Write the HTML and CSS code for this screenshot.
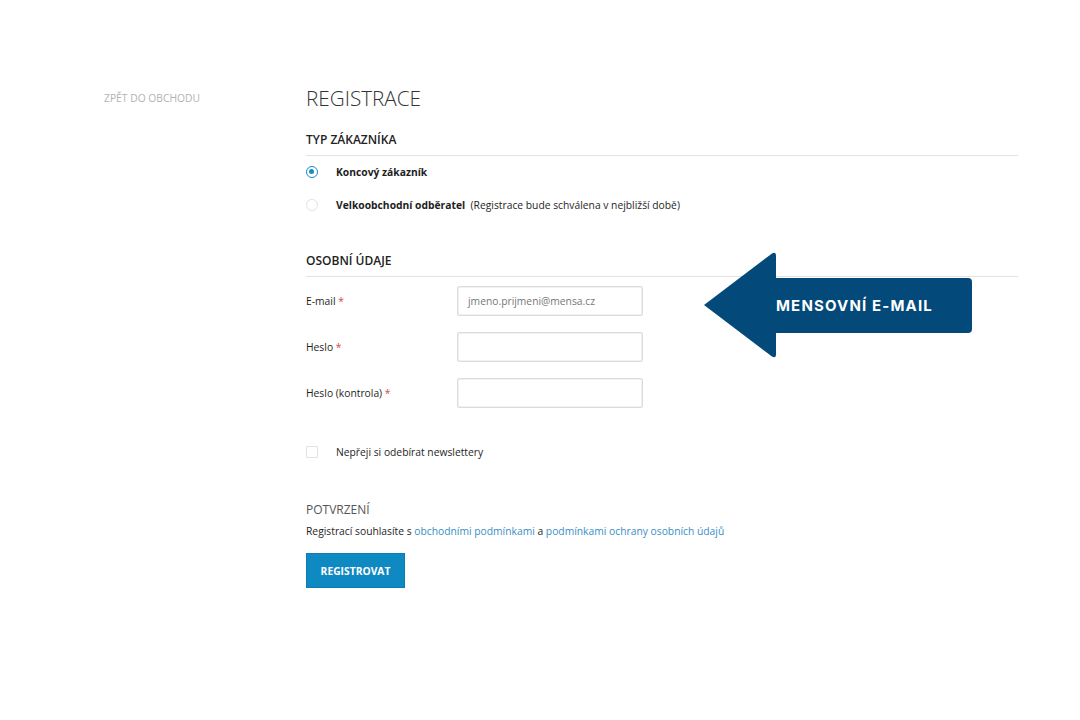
FILE: index.html
```html
<!DOCTYPE html>
<html lang="cs">
<head>
<meta charset="utf-8">
<title>Registrace</title>
<link rel="stylesheet" href="styles.css">
</head>
<body>
<div class="page">
  <aside class="sidebar">
    <a class="back" href="#">ZPĚT DO OBCHODU</a>
  </aside>
  <main class="main">
    <h1 class="title">REGISTRACE</h1>

    <section class="section">
      <h2 class="section-title">TYP ZÁKAZNÍKA</h2>
      <div class="radio-row">
        <span class="radio checked"></span>
        <span class="radio-label"><b>Koncový zákazník</b></span>
      </div>
      <div class="radio-row">
        <span class="radio"></span>
        <span class="radio-label"><b>Velkoobchodní odběratel</b>&nbsp; (Registrace bude schválena v nejbližší době)</span>
      </div>
    </section>

    <section class="section personal">
      <h2 class="section-title">OSOBNÍ ÚDAJE</h2>
      <div class="field">
        <label class="field-label">E-mail <span class="req">*</span></label>
        <div class="input">jmeno.prijmeni@mensa.cz</div>
      </div>
      <div class="field">
        <label class="field-label">Heslo <span class="req">*</span></label>
        <div class="input"></div>
      </div>
      <div class="field">
        <label class="field-label">Heslo (kontrola) <span class="req">*</span></label>
        <div class="input"></div>
      </div>
      <div class="check-row">
        <span class="checkbox"></span>
        <span class="check-label">Nepřeji si odebírat newslettery</span>
      </div>
    </section>

    <section class="confirm">
      <h3 class="confirm-title">POTVRZENÍ</h3>
      <p class="terms">Registrací souhlasíte s <a href="#">obchodními podmínkami</a> a <a href="#">podmínkami ochrany osobních údajů</a></p>
      <button class="submit">REGISTROVAT</button>
    </section>
  </main>
</div>

<div class="callout">
  <svg class="callout-shape" width="270" height="110" viewBox="0 0 270 110">
    <path d="M0 53 L68 1.5 Q72 -1 72 4 L72 26 L264 26 Q268 26 268 30 L268 77 Q268 81 264 81 L72 81 L72 102 Q72 107 68 104.5 Z" fill="#034a7b"/>
  </svg>
  <span class="callout-text">MENSOVNÍ E-MAIL</span>
</div>
</body>
</html>
```

FILE: styles.css
```css
* { box-sizing: border-box; }

html, body {
  margin: 0;
  padding: 0;
  background: #ffffff;
}

body {
  font-family: "Open Sans", "Liberation Sans", sans-serif;
  color: #222;
  width: 1080px;
  height: 720px;
  position: relative;
  overflow: hidden;
}

.page {
  display: flex;
  padding: 83px 0 0 104px;
}

.sidebar {
  width: 202px;
  flex: none;
  padding-top: 0;
}

.back {
  display: block;
  font-size: 10.3px;
  line-height: 14px;
  color: #b3b3b3;
  text-decoration: none;
  letter-spacing: 0;
  margin-top: 8px;
}

.main {
  width: 712px;
  flex: none;
}

.title {
  margin: 0;
  font-size: 20.7px;
  font-weight: 300;
  color: #333;
  line-height: 30px;
}

.section-title {
  margin: 0;
  font-size: 12px;
  font-weight: 600;
  color: #222;
  line-height: 16px;
  padding-bottom: 7px;
  border-bottom: 1px solid #e3e3e3;
}

.section {
  margin-top: 19px;
}

.radio-row {
  display: flex;
  align-items: center;
  height: 16px;
  margin-top: 8px;
  margin-bottom: 17px;
}

.radio-row + .radio-row {
  margin-top: 0;
}

.radio {
  width: 12px;
  height: 12px;
  border-radius: 50%;
  border: 1px solid #e2e2e2;
  background: #fff;
  flex: none;
  margin-right: 18px;
  position: relative;
}

.radio.checked {
  border: 1.5px solid #1a8ac6;
}

.radio.checked::after {
  content: "";
  position: absolute;
  left: 2px;
  top: 2px;
  width: 5px;
  height: 5px;
  border-radius: 50%;
  background: #1a8ac6;
}

.radio-label {
  font-size: 10.3px;
  color: #1e1e1e;
}

.radio-label b {
  font-weight: 700;
}

.personal {
  margin-top: 40px;
}

.field {
  display: flex;
  align-items: center;
  height: 30px;
  margin-top: 16px;
}

.personal .section-title + .field {
  margin-top: 9px;
}

.field-label {
  width: 151px;
  flex: none;
  font-size: 10.3px;
  color: #1e1e1e;
}

.req {
  color: #d24b35;
}

.input {
  width: 186px;
  height: 30px;
  border: 1px solid #dcdcdc;
  border-radius: 2px;
  box-shadow: inset 0 0 0 1px #f1f1f1;
  font-size: 10.3px;
  color: #777;
  padding: 0 10px;
  display: flex;
  align-items: center;
}

.check-row {
  display: flex;
  align-items: center;
  margin-top: 36px;
  height: 16px;
}

.checkbox {
  width: 12px;
  height: 12px;
  border: 1px solid #e2e2e2;
  border-radius: 1px;
  flex: none;
  margin-right: 18px;
}

.check-label {
  font-size: 10.3px;
  color: #1e1e1e;
}

.confirm {
  margin-top: 42px;
}

.confirm-title {
  margin: 0;
  font-size: 12px;
  font-weight: 400;
  color: #555;
  line-height: 16px;
}

.terms {
  margin: 5px 0 0;
  font-size: 10.3px;
  color: #1e1e1e;
  line-height: 16px;
}

.terms a {
  color: #3a8ec6;
  text-decoration: none;
}

.submit {
  display: block;
  margin-top: 14px;
  width: 99px;
  height: 35px;
  background: #0f89c2;
  border: 1px solid #0b7db3;
  color: #fff;
  font-family: "Open Sans", "Liberation Sans", sans-serif;
  font-size: 10.3px;
  font-weight: 700;
  padding: 0;
  cursor: pointer;
}

.callout {
  position: absolute;
  left: 704px;
  top: 252px;
  width: 270px;
  height: 108px;
}

.callout-shape {
  position: absolute;
  left: 0;
  top: 0;
}

.callout-text {
  position: absolute;
  left: 72px;
  top: 26px;
  height: 55px;
  display: flex;
  align-items: center;
  font-family: "Inter", "Open Sans", sans-serif;
  font-weight: 700;
  font-size: 15px;
  color: #fff;
  white-space: nowrap;
  letter-spacing: 1.15px;
}
```
